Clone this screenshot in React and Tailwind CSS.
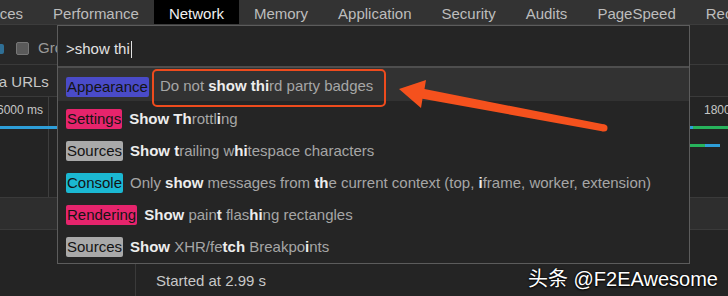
const tabs = ["Sources", "Performance", "Network", "Memory", "Application", "Security", "Audits", "PageSpeed", "Recorder"];

const rows = [
  {
    cat: "Appearance",
    badge: "bg-[#4a4bc8]",
    active: true,
    parts: [["Do not ", 0], ["show thi", 1], ["rd party badges", 0]],
  },
  {
    cat: "Settings",
    badge: "bg-[#e6246c]",
    parts: [["Show Th", 1], ["rottl", 0], ["i", 1], ["ng", 0]],
  },
  {
    cat: "Sources",
    badge: "bg-[#a9a9a9]",
    parts: [["Show t", 1], ["railing w", 0], ["hi", 1], ["tespace characters", 0]],
  },
  {
    cat: "Console",
    badge: "bg-[#1bb8d2]",
    parts: [
      ["Only ", 0],
      ["show", 1],
      [" messages from ", 0],
      ["th", 1],
      ["e current context (top, ", 0],
      ["i", 1],
      ["frame, worker, extension)", 0],
    ],
  },
  {
    cat: "Rendering",
    badge: "bg-[#e6246c]",
    parts: [["Show", 1], [" pain", 0], ["t", 1], [" flas", 0], ["hi", 1], ["ng rectangles", 0]],
  },
  {
    cat: "Sources",
    badge: "bg-[#a9a9a9]",
    parts: [["Show", 1], [" XHR/fe", 0], ["tch", 1], [" Breakpo", 0], ["i", 1], ["nts", 0]],
  },
];

const CommandRow = ({ row }) => (
  <div
    className={`flex items-center pl-[8px] pt-[4px] whitespace-nowrap ${
      row.active ? "h-[33px] bg-[#323232]" : "h-[32px]"
    }`}
  >
    <span className={`${row.badge} h-[20px] leading-[20px] px-[1px] rounded-[2px] text-[#141414]`}>{row.cat}</span>
    <span className={row.active ? "ml-[11px]" : "ml-[7px]"}>
      {row.parts.map(([t, b], i) => (
        <span key={i} className={b ? "font-bold text-[#ededed]" : "text-[#a6a6a6]"}>
          {t}
        </span>
      ))}
    </span>
  </div>
);

export default function App() {
  return (
    <div className="relative w-[728px] h-[296px] overflow-hidden bg-[#242424] text-[15px] font-['Liberation_Sans',Arial,sans-serif]">
      {/* tab strip */}
      <div className="flex h-[25px] bg-[#333333] border-b border-[#3c3c3c] ml-[-47px] whitespace-nowrap">
        {tabs.map((t) => (
          <div
            key={t}
            className={`flex items-center px-[15px] pt-[5px] ${t === "Network" ? "bg-black text-[#f0f0f0]" : "text-[#bdbdbd]"}`}
          >
            {t}
          </div>
        ))}
      </div>

      {/* toolbar */}
      <div className="flex items-center h-[40px] pt-[8px] bg-[#282828] border-b border-[#3a3a3a] whitespace-nowrap">
        <div className="w-[4px] h-[10px] bg-[#2f6f95] rounded-r-[2px]" />
        <div className="ml-[12px] w-[13px] h-[13px] rounded-[2px] bg-[#5a5a5a] border border-[#777]" />
        <span className="ml-[9px] text-[#9a9a9a]">Group by frame</span>
      </div>

      {/* filter row */}
      <div className="flex items-center h-[32px] pt-[4px] bg-[#272727] border-b border-[#3a3a3a] whitespace-nowrap text-[#c8c8c8]">
        <span className="ml-[-22px]">data URLs</span>
        <span className="ml-[10px]">All</span>
      </div>

      {/* timeline overview */}
      <div className="relative flex h-[100px] text-[12px] text-[#c6c6c6] whitespace-nowrap">
        <div className="w-[49px] border-r border-[#3e3e3e] flex justify-end pr-[5px] pt-[4px]">6000 ms</div>
        <div className="flex-1 flex pt-[4px]">
          <div className="w-[16px] border-r border-[#3e3e3e] ml-[623px]" />
          <div className="ml-[16px]">18000 ms</div>
        </div>
        <svg className="absolute inset-0" width="728" height="100">
          <rect x="0" y="29" width="62" height="3" fill="#2e9ed8" />
          <rect x="689" y="29" width="4" height="3" fill="#2e9ed8" />
          <rect x="693" y="29" width="40" height="3" fill="#27b35c" />
          <rect x="689" y="47" width="16" height="3" fill="#27b35c" />
          <rect x="705" y="47" width="15" height="3" fill="#2e9ed8" />
        </svg>
      </div>

      {/* summary band */}
      <div className="h-[33px] bg-[#2e2e2e] border-y border-[#3a3a3a]" />

      {/* lower panel */}
      <div className="flex h-[66px]">
        <div className="w-[136px] border-r border-[#3a3a3a]" />
        <div className="pl-[20px] pt-[40px] text-[#c8c8c8] whitespace-nowrap">Started at 2.99 s</div>
      </div>

      {/* command menu */}
      <div className="absolute left-[57px] top-[25px] w-[633px] h-[239px] bg-[#252525] border border-[#5c5c5c] flex flex-col">
        <div className="h-[42px] flex items-center pl-[8px] pt-[6px] text-[#e2e2e2] border-b-2 border-[#4e4e4e]">
          <span>&gt;show thi</span>
          <span className="w-[1px] h-[17px] bg-[#e2e2e2] ml-[1px]" />
        </div>
        {rows.map((r, i) => (
          <CommandRow key={i} row={r} />
        ))}
      </div>

      {/* annotation */}
      <div className="absolute left-[152px] top-[69px] w-[234px] h-[38px] border-[2.5px] border-[#ee4b1d] rounded-[5px]" />
      <svg className="absolute left-0 top-0 pointer-events-none" width="728" height="296">
        <polygon
          points="399,89 426,80 424.5,89 604.7,124.6 603.3,131.4 422.5,98.7 421,108"
          fill="#f5511d"
        />
        <circle cx="604" cy="128" r="3.5" fill="#f5511d" />
      </svg>

      {/* watermark */}
      <div className="absolute right-[10px] top-[264px] text-[20px] text-white whitespace-nowrap [text-shadow:0_0_2px_#000,0_1px_2px_#000] font-['Liberation_Sans','Noto_Sans_CJK_SC',sans-serif]">
        头条 @F2EAwesome
      </div>
    </div>
  );
}
